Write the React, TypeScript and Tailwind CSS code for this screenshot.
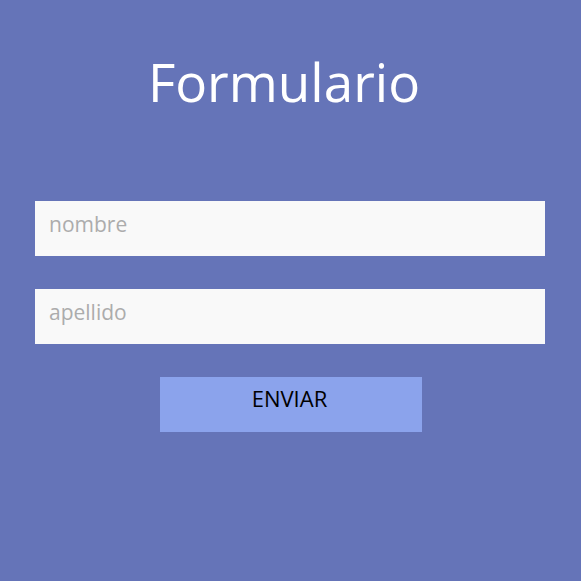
export default function App() {
  return (
    <div
      className="flex h-[581px] w-[581px] flex-col bg-[#6574b8] pl-[35px]"
      style={{ fontFamily: '"Open Sans", "Noto Sans", sans-serif' }}
    >
      <h1 className="mt-[42px] h-[80px] w-[510px] pr-[12px] text-center text-[53px] leading-[80px] font-normal text-white">
        Formulario
      </h1>
      <form className="mt-[79px] flex w-[510px] flex-col items-start">
        <input
          type="text"
          placeholder="nombre"
          className="h-[55px] w-full bg-[#f9f9f9] px-[14px] pb-[9px] text-[21px] text-gray-700 outline-none placeholder:text-[#acacac]"
        />
        <input
          type="text"
          placeholder="apellido"
          className="mt-[33px] h-[55px] w-full bg-[#f9f9f9] px-[14px] pb-[9px] text-[21px] text-gray-700 outline-none placeholder:text-[#acacac]"
        />
        <button
          type="button"
          className="mt-[33px] ml-[125px] h-[55px] w-[262px] bg-[#8ba3ec] pr-[3px] pb-[13px] text-[22px] text-black"
        >
          ENVIAR
        </button>
      </form>
    </div>
  );
}
